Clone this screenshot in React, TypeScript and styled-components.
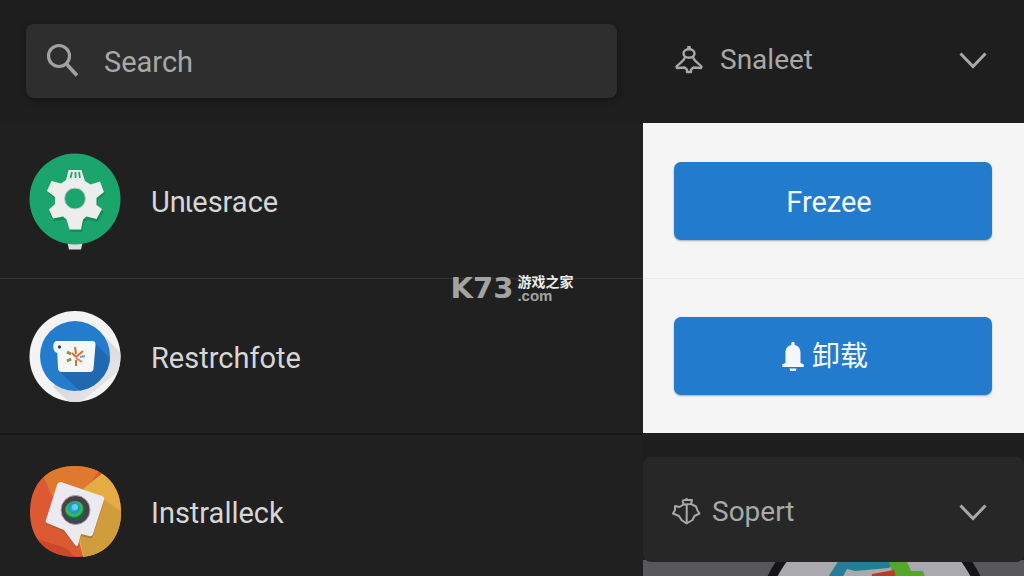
import React from "react";
import styled, { createGlobalStyle } from "styled-components";

const GlobalStyle = createGlobalStyle`
  *, *::before, *::after { box-sizing: border-box; }
  body {
    margin: 0;
    background: #1e1e1e;
    color: #d6d6d8;
    font-family: Roboto, "Noto Sans CJK SC", sans-serif;
    font-size: 29px;
    line-height: 36px;
  }
  button, input, select { font: inherit; }
`;

const Page = styled.div`
  position: relative;
  display: grid;
  grid-template-columns: minmax(0, 643fr) minmax(0, 381fr);
  height: 100vh;
  overflow: hidden;
`;

const Column = styled.div`
  display: flex;
  flex-direction: column;
`;

const SearchBar = styled.label`
  display: flex;
  align-items: center;
  gap: 24px;
  flex: none;
  height: 74px;
  margin: 24px 26px 25px 26px;
  padding: 0 20px;
  border-radius: 8px;
  background: #2e2e2e;
  color: #a2a2a2;
  box-shadow: 0 2px 6px #141414;
`;

const SearchInput = styled.input`
  flex: 1;
  min-width: 0;
  padding: 2px 0 0;
  border: 0;
  outline: 0;
  background: transparent;
  color: inherit;
  &::placeholder { color: #a8a8a8; opacity: 1; }
`;

const AppList = styled.ul`
  margin: 0;
  padding: 0;
  list-style: none;
`;

const AppRow = styled.li`
  display: flex;
  align-items: center;
  gap: 29px;
  height: 155px;
  padding: 0 28px;
  background: #202020;
  & + & { border-top: 1px solid #343434; }
  & + & + & { border-top: 2px solid #161616; }
`;

const AppName = styled.span`
  padding-top: 3px;
`;

const Icon = styled.svg`
  display: block;
  flex: none;
  overflow: visible;
`;

const Dropdown = styled.div<{ $raised?: boolean }>`
  display: grid;
  grid-template-columns: auto minmax(0, 1fr) auto;
  align-items: center;
  flex: none;
  height: ${(p) => (p.$raised ? 105 : 123)}px;
  margin-top: ${(p) => (p.$raised ? 24 : 0)}px;
  padding: ${(p) => (p.$raised ? "4px 37px 0 29px" : "0 37px 3px 31px")};
  border-radius: ${(p) => (p.$raised ? 8 : 0)}px;
  background: ${(p) => (p.$raised ? "#272727" : "transparent")};
  color: #a8a8a8;
  position: relative;
  z-index: 1;
  & > svg { grid-row: 1; pointer-events: none; }
  & > svg:first-of-type { grid-column: 1; }
  & > svg:last-of-type { grid-column: 3; }
`;

const Select = styled.select<{ $indent: number }>`
  grid-row: 1;
  grid-column: 1 / -1;
  min-width: 0;
  padding: 0 0 0 ${(p) => p.$indent}px;
  border: 0;
  outline: 0;
  appearance: none;
  background: transparent;
  color: inherit;
  font-size: 28px;
`;

const Actions = styled.div`
  flex: none;
  background: #f5f5f5;
`;

const ActionCell = styled.div`
  display: flex;
  align-items: center;
  height: 155px;
  padding: 0 32px 0 31px;
  & + & { border-top: 1px solid #ebebeb; }
`;

const ActionButton = styled.button<{ $withIcon?: boolean }>`
  display: flex;
  align-items: center;
  justify-content: center;
  gap: 8px;
  flex: 1;
  height: 78px;
  padding: ${(p) => (p.$withIcon ? "2px 16px 0 0" : "2px 8px 0 0")};
  border: 0;
  border-radius: 7px;
  background: #237bce;
  color: #f4f8fc;
  font-size: ${(p) => (p.$withIcon ? 28 : 29)}px;
  box-shadow: 0 1px 2px #9fa8b2;
`;

const Preview = styled.div`
  flex: 1;
  min-height: 0;
  margin-top: -2px;
  padding-left: 84px;
  background: #58585c;
  overflow: hidden;
  display: flex;
  justify-content: center;
`;

const Watermark = styled.div`
  position: absolute;
  left: 50%;
  top: 50%;
  transform: translate(-50%, -50%);
  display: flex;
  align-items: center;
  gap: 4px;
  color: #a3a3a3;
`;

const Brand = styled.span`
  font: 700 29px/30px "DejaVu Sans", sans-serif;
`;

const BrandSide = styled.span`
  display: flex;
  flex-direction: column;
  font: 700 15px/13px "Liberation Sans", sans-serif;
`;

const BrandName = styled.span`
  color: #ececec;
  font: 700 14px/15px "Noto Sans CJK SC", sans-serif;
`;

const Chevron = () => (
  <Icon width="28" height="18" viewBox="0 0 28 18" fill="none" stroke="currentColor" strokeWidth="3" aria-hidden="true">
    <path d="M1.5 2.500 14 15.500 26.5 2.500" />
  </Icon>
);

const SearchIcon = () => (
  <Icon width="34" height="36" viewBox="0 0 34 36" fill="none" stroke="currentColor" aria-hidden="true">
    <circle cx="13" cy="13" r="10.5" strokeWidth="3.2" />
    <path d="m20.5 21 10.5 11.5" strokeWidth="3.6" />
  </Icon>
);

const BellOutline = () => (
  <Icon width="30" height="30" viewBox="0 0 30 30" fill="none" stroke="currentColor" strokeWidth="2.400" strokeLinejoin="round" aria-hidden="true">
    <path d="M15 1v4" strokeWidth="3.500" />
    <ellipse cx="15" cy="8.500" rx="5.500" ry="4.200" />
    <path d="M11 12C10 16 6 18 2.500 21.500L3 23l7.500-.5 2.500 2.200V27h4v-2.300l2.500-2.200L27 23l.5-1.500C24 18 20 16 19 12" />
  </Icon>
);

const SupportIcon = () => (
  <Icon width="30" height="30" viewBox="0 0 30 30" fill="none" stroke="currentColor" strokeWidth="2" strokeLinejoin="round" aria-hidden="true">
    <path d="m10.500 3.500 4-.7V1M14.500 3H20l-1 4-7.500.5-1-4M14.700 7v20" />
    <path d="m11.500 7.500-4 2.500L3 9v4l-2 3.500L7 19l2.500 4 5 3.500 6-3.500 2-4 5-2.500-2-3L24 9.500 19 7" />
  </Icon>
);

const BellSolid = () => (
  <Icon width="22" height="30" viewBox="0 0 22 30" fill="currentColor" aria-hidden="true">
    <path d="M9.300 3V1.500a1.700 1.700 0 0 1 3.400 0V3c4 .8 5.800 4 5.800 8v10l3.200 1.300V25H.3v-2.700L3.500 21V11c0-4 1.800-7.200 5.800-8Z" />
    <path d="M7.500 26.500h7l-.7 2.500H8.200Z" />
  </Icon>
);

const GearApp = () => (
  <Icon width="94" height="94" viewBox="28 153 94 94" aria-hidden="true">
    <path d="M67 240h16l-2 8.500H69Z" fill="#dedede" />
    <circle cx="75" cy="198" r="45.500" fill="#1ba56d" />
    <path d="M68.500 169h13l3.500 11 5.500 3.500 9.500-3 4 10.500-7.500 6v7l6 5-6 10-9.500-2.500-4 2.500-2 10H70l-3-10-4-2.500-10 2-5-9 7-6v-7L47 190l4.500-10 9.500 2.500 5-3.500Z" fill="#0e7d50" opacity=".6" transform="translate(1 2)" />
    <path d="M68.500 169h13l3.500 11 5.500 3.500 9.500-3 4 10.500-7.500 6v7l5.500 4-5.500 10-10-2.500-3.500 3-2 10H69.500l-3-10-3.500-3-10 2-4-9 6-5.500v-7L47 190l4.500-10 9.500 2.500 5-3.500Z" fill="#eceeee" />
    <circle cx="75" cy="197.500" r="10.500" fill="#1ba56d" stroke="#c0cbc6" />
    <path d="m72 171-1.500 6M75.500 171v6M79 171l1 6" stroke="#1ba56d" strokeWidth="1.800" />
  </Icon>
);

const TagApp = () => (
  <Icon width="94" height="94" viewBox="28 309 94 94" aria-hidden="true">
    <defs>
      <clipPath id="tagBack"><circle cx="75" cy="356.500" r="45.500" /></clipPath>
      <clipPath id="tagDisc"><circle cx="75" cy="356" r="35" /></clipPath>
      <linearGradient id="tagShade" x1="0" y1="0" x2="1" y2="1">
        <stop offset="0" stopColor="#c3c5cb" />
        <stop offset="1" stopColor="#f3f3f3" />
      </linearGradient>
    </defs>
    <circle cx="75" cy="356.500" r="45.500" fill="#f3f3f3" />
    <path d="m100 332 30 30-55 45-22-20Z" fill="url(#tagShade)" clipPath="url(#tagBack)" />
    <circle cx="75" cy="356" r="35" fill="#247dcc" />
    <path d="m95 343 20 20-30 33-27-26Z" fill="#2069b0" clipPath="url(#tagDisc)" />
    <path d="M57 341h35q4 0 3.500 4l-2 24q-.4 3-4 3H62q-4 0-4-4l-.7-15q-4-1-4-6.500 0-5.500 3.700-5.500Z" fill="#f5f6f7" />
    <circle cx="59.500" cy="347" r="1.700" fill="#204f8c" />
    <g fill="none" strokeWidth="2">
      <path d="m75 347 1 7m0 6v6" stroke="#c37734" />
      <path d="m76 357 7-6M76 357l-4-4" stroke="#e36b37" />
      <path d="m76 358 6 4" stroke="#ed7d62" />
      <path d="m67 352 4 2m-4 7 4-2" stroke="#829348" strokeWidth="3" />
      <path d="m80 357 5-1" stroke="#58aeb4" />
    </g>
  </Icon>
);

const CameraApp = () => (
  <Icon width="94" height="94" viewBox="28 465 94 94" aria-hidden="true">
    <defs>
      <clipPath id="cameraShape">
        <path d="M75 466c26 0 46 17 46 46 0 28-18 45-43 45-31 0-48-17-48-45 0-29 18-46 45-46Z" />
      </clipPath>
      <radialGradient id="lens" cx="45%" cy="35%">
        <stop offset="0" stopColor="#50d4f5" />
        <stop offset=".45" stopColor="#1698bd" />
        <stop offset=".8" stopColor="#47bd43" />
        <stop offset="1" stopColor="#14634e" />
      </radialGradient>
    </defs>
    <g clipPath="url(#cameraShape)">
      <path d="M28 464h94v94H28Z" fill="#dd5934" />
      <path d="M43 475 56 460h50L86 490l-34 6Z" fill="#df792f" />
      <path d="m84 488 20-16 18 10v78H84l-6-22Z" fill="#e4ac43" />
      <path d="m102 498 20 14v46H84l-4-20Z" fill="#d19c3b" />
      <path d="m40 540 26 8 12 12H55L34 541Z" fill="#cf472b" />
    </g>
    <path d="m61 482 41 14q3 1 2 4l-11 34q-1 3-4 2l-8-2-3 11q-1 2-3 0L64 530l-17-7q-2-1-1-3l11-35q1-3 4-3Z" fill="#9a6028" opacity=".55" transform="translate(0 2)" />
    <path d="m61 482 41 14q3 1 2 4l-11 34q-1 3-4 2l-8-2-3 11q-1 2-3 0L64 530l-17-7q-2-1-1-3l11-35q1-3 4-3Z" fill="#ebeaf0" />
    <circle cx="75.500" cy="510" r="14.500" fill="#474247" stroke="#a5a0a4" />
    <circle cx="75" cy="511" r="10" fill="url(#lens)" />
    <circle cx="75" cy="507" r="3" fill="#65cef5" />
  </Icon>
);

const PreviewArt = () => (
  <Icon width="220" height="220" viewBox="766 560 220 220" aria-hidden="true">
    <circle cx="874" cy="627" r="118" fill="#151517" />
    <circle cx="874" cy="627" r="109" fill="#aaa9ae" />
    <path d="m839 560 48-1 7 4-5 5-34 3-8-2-7 13h-15Z" fill="#247d99" />
    <path d="M889 562h18l4 9h12l3 9h-31Z" fill="#55a629" />
    <path d="m872 574 22-4 3 12h-26Z" fill="#b83c2c" />
  </Icon>
);

const apps = [
  { name: "Unɩesrace", Art: GearApp },
  { name: "Restrchfote", Art: TagApp },
  { name: "Instralleck", Art: CameraApp },
];

export default function App() {
  return (
    <>
      <GlobalStyle />
      <Page>
        <Column>
          <SearchBar>
            <SearchIcon />
            <SearchInput type="text" placeholder="Search" aria-label="Search" />
          </SearchBar>
          <AppList>
            {apps.map(({ name, Art }) => (
              <AppRow key={name}>
                <Art />
                <AppName>{name}</AppName>
              </AppRow>
            ))}
          </AppList>
        </Column>
        <Column>
          <Dropdown>
            <BellOutline />
            <Select $indent={46} aria-label="Snaleet">
              <option>Snaleet</option>
            </Select>
            <Chevron />
          </Dropdown>
          <Actions>
            <ActionCell>
              <ActionButton type="button">Frezee</ActionButton>
            </ActionCell>
            <ActionCell>
              <ActionButton type="button" $withIcon>
                <BellSolid />
                卸载
              </ActionButton>
            </ActionCell>
          </Actions>
          <Dropdown $raised>
            <SupportIcon />
            <Select $indent={40} aria-label="Sopert">
              <option>Sopert</option>
            </Select>
            <Chevron />
          </Dropdown>
          <Preview>
            <PreviewArt />
          </Preview>
        </Column>
        <Watermark>
          <Brand>K73</Brand>
          <BrandSide>
            <BrandName>游戏之家</BrandName>
            <span>.com</span>
          </BrandSide>
        </Watermark>
      </Page>
    </>
  );
}
